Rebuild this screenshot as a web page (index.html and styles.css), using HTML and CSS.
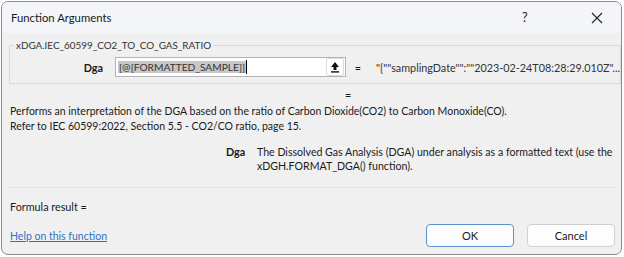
FILE: index.html
```html
<!DOCTYPE html>
<html>
<head>
    <title>Function Arguments</title>
    <link rel="stylesheet" href="styles.css">
</head>
<body>
    <div class="dialog">
        <!-- title bar -->
        <div class="titlebar">
            <span class="title">Function Arguments</span>
            <span class="help">?</span>
            <span class="close">
                <svg width="12" height="12" viewBox="0 0 12 12"><path d="M1 1 L11 11 M11 1 L1 11" stroke="#222" stroke-width="1.1" fill="none"/></svg>
            </span>
        </div>
        <div class="content">
            <!-- argument group -->
            <fieldset class="group">
                <legend>xDGA.IEC_60599_CO2_TO_CO_GAS_RATIO</legend>
                <div class="argrow">
                    <span class="argname">Dga</span>
                    <div class="argbox">
                        <span class="argtext"><span class="sel">[@[FORMATTED_SAMPLE]]</span><span class="caret"></span></span>
                        <span class="refbtn">
                            <svg width="10" height="12" viewBox="0 0 10 12"><path d="M5 1 L1 6 H3.5 V9 H6.5 V6 H9 Z" fill="#111"/><rect x="1" y="10.2" width="8" height="1.4" fill="#111"/></svg>
                        </span>
                    </div>
                    <span class="eq">=</span>
                    <span class="argval">"{""samplingDate"":""2023-02-24T08:28:29.010Z"...</span>
                </div>
            </fieldset>
            <div class="resultrow"><span class="eq">=</span></div>
            <p class="desc">Performs an interpretation of the DGA based on the ratio of Carbon Dioxide(CO2) to Carbon Monoxide(CO).<br>Refer to IEC 60599:2022, Section 5.5 - CO2/CO ratio, page 15.</p>
            <div class="argdesc">
                <span class="argname">Dga</span>
                <span class="argtextdesc">The Dissolved Gas Analysis (DGA) under analysis as a formatted text (use the xDGH.FORMAT_DGA() function).</span>
            </div>
            <div class="sep"></div>
            <div class="formula">Formula result =</div>
            <div class="footer">
                <a class="helplink" href="#">Help on this function</a>
                <div class="buttons">
                    <button class="btn ok">OK</button>
                    <button class="btn">Cancel</button>
                </div>
            </div>
        </div>
    </div>
</body>
</html>
```

FILE: styles.css
```css
/* dialog colours */
:root {
    --dlg-bg: #f0f0f0;
    --title-bg: #f3f5f9;
    --text: #1a1a1a;
    --link: #2f72c4;
}

body {
    margin: 0;
    background-color: #ffffff;
    font-family: Lato, "Open Sans", sans-serif;
    font-size: 10.8px;
    color: var(--text);
}

.dialog {
    margin: 1px 2px 0 1px;
    height: 254px;
    border: 1px solid #8a8a8a;
    border-radius: 7px;
    background-color: var(--dlg-bg);
    overflow: hidden;
    box-sizing: border-box;
}

/* title bar */
.titlebar {
    height: 31px;
    background-color: var(--title-bg);
    display: flex;
    align-items: center;
    padding-left: 9px;
    font-size: 11.3px;
}

.title {
    flex: 1;
}

.help {
    width: 20px;
    margin-right: 49px;
    font-size: 12.5px;
}

.close {
    width: 12px;
    margin-right: 18px;
    display: flex;
}

.content {
    padding: 6px 6px 0 7px;
}

/* group box */
.group {
    margin: 0;
    margin-right: 2px;
    border: 1px solid #d9d9d9;
    padding: 6px 0 6px 0;
}

.group legend {
    padding: 0 2px;
    margin-left: 4px;
    color: #333;
    font-size: 9.9px;
}

.argrow {
    display: flex;
    align-items: center;
    height: 20px;
    white-space: nowrap;
}

.argname {
    font-weight: bold;
    width: 105px;
    text-align: right;
    padding-right: 12px;
    box-sizing: border-box;
}

.argbox {
    width: 231px;
    height: 20px;
    border: 1px solid #b4b4b4;
    background-color: #fff;
    box-sizing: border-box;
    display: flex;
    align-items: center;
    padding-left: 2px;
}

.argtext {
    flex: 1;
    display: flex;
    align-items: center;
}

.sel {
    background-color: #c7c7c7;
    padding: 0 1px;
    color: #333;
    font-size: 10.2px;
}

.caret {
    display: inline-block;
    width: 1px;
    height: 14px;
    background-color: #000;
}

.refbtn {
    width: 16px;
    height: 16px;
    margin-right: 1px;
    border: 1px solid #dcdcdc;
    border-radius: 2px;
    display: flex;
    align-items: center;
    justify-content: center;
}

.eq {
    width: 24px;
    text-align: center;
}

.argval {
    color: #333;
    padding-left: 6px;
}

.resultrow {
    padding-left: 336px;
    padding-top: 3px;
    height: 17px;
    line-height: 15px;
}

/* description */
.desc {
    margin: 0;
    padding-left: 1px;
    line-height: 15px;
    font-size: 10.5px;
}

.argdesc {
    display: flex;
    margin-top: 11px;
    line-height: 14px;
}

.argdesc .argname {
    width: 248px;
    padding-right: 0;
    text-align: left;
    padding-left: 217px;
}

.argtextdesc {
    flex: 1;
    font-size: 10.6px;
}

.sep {
    margin-top: 14px;
    border-top: 1px solid #e2e2e2;
    width: 606px;
}

.formula {
    margin-top: 12px;
    padding-left: 1px;
}

.footer {
    display: flex;
    align-items: center;
    margin-top: 11px;
}

.helplink {
    flex: 1;
    color: var(--link);
    padding-left: 1px;
    font-size: 10.5px;
}

.buttons {
    display: flex;
    gap: 13px;
    margin-right: 0;
}

.btn {
    width: 88px;
    height: 23px;
    background-color: #fdfdfd;
    border: 1px solid #d0d0d0;
    border-radius: 4px;
    font-family: Lato, "Open Sans", sans-serif;
    font-size: 11px;
    color: var(--text);
}

.btn.ok {
    border-color: #5a8fd0;
}
```
